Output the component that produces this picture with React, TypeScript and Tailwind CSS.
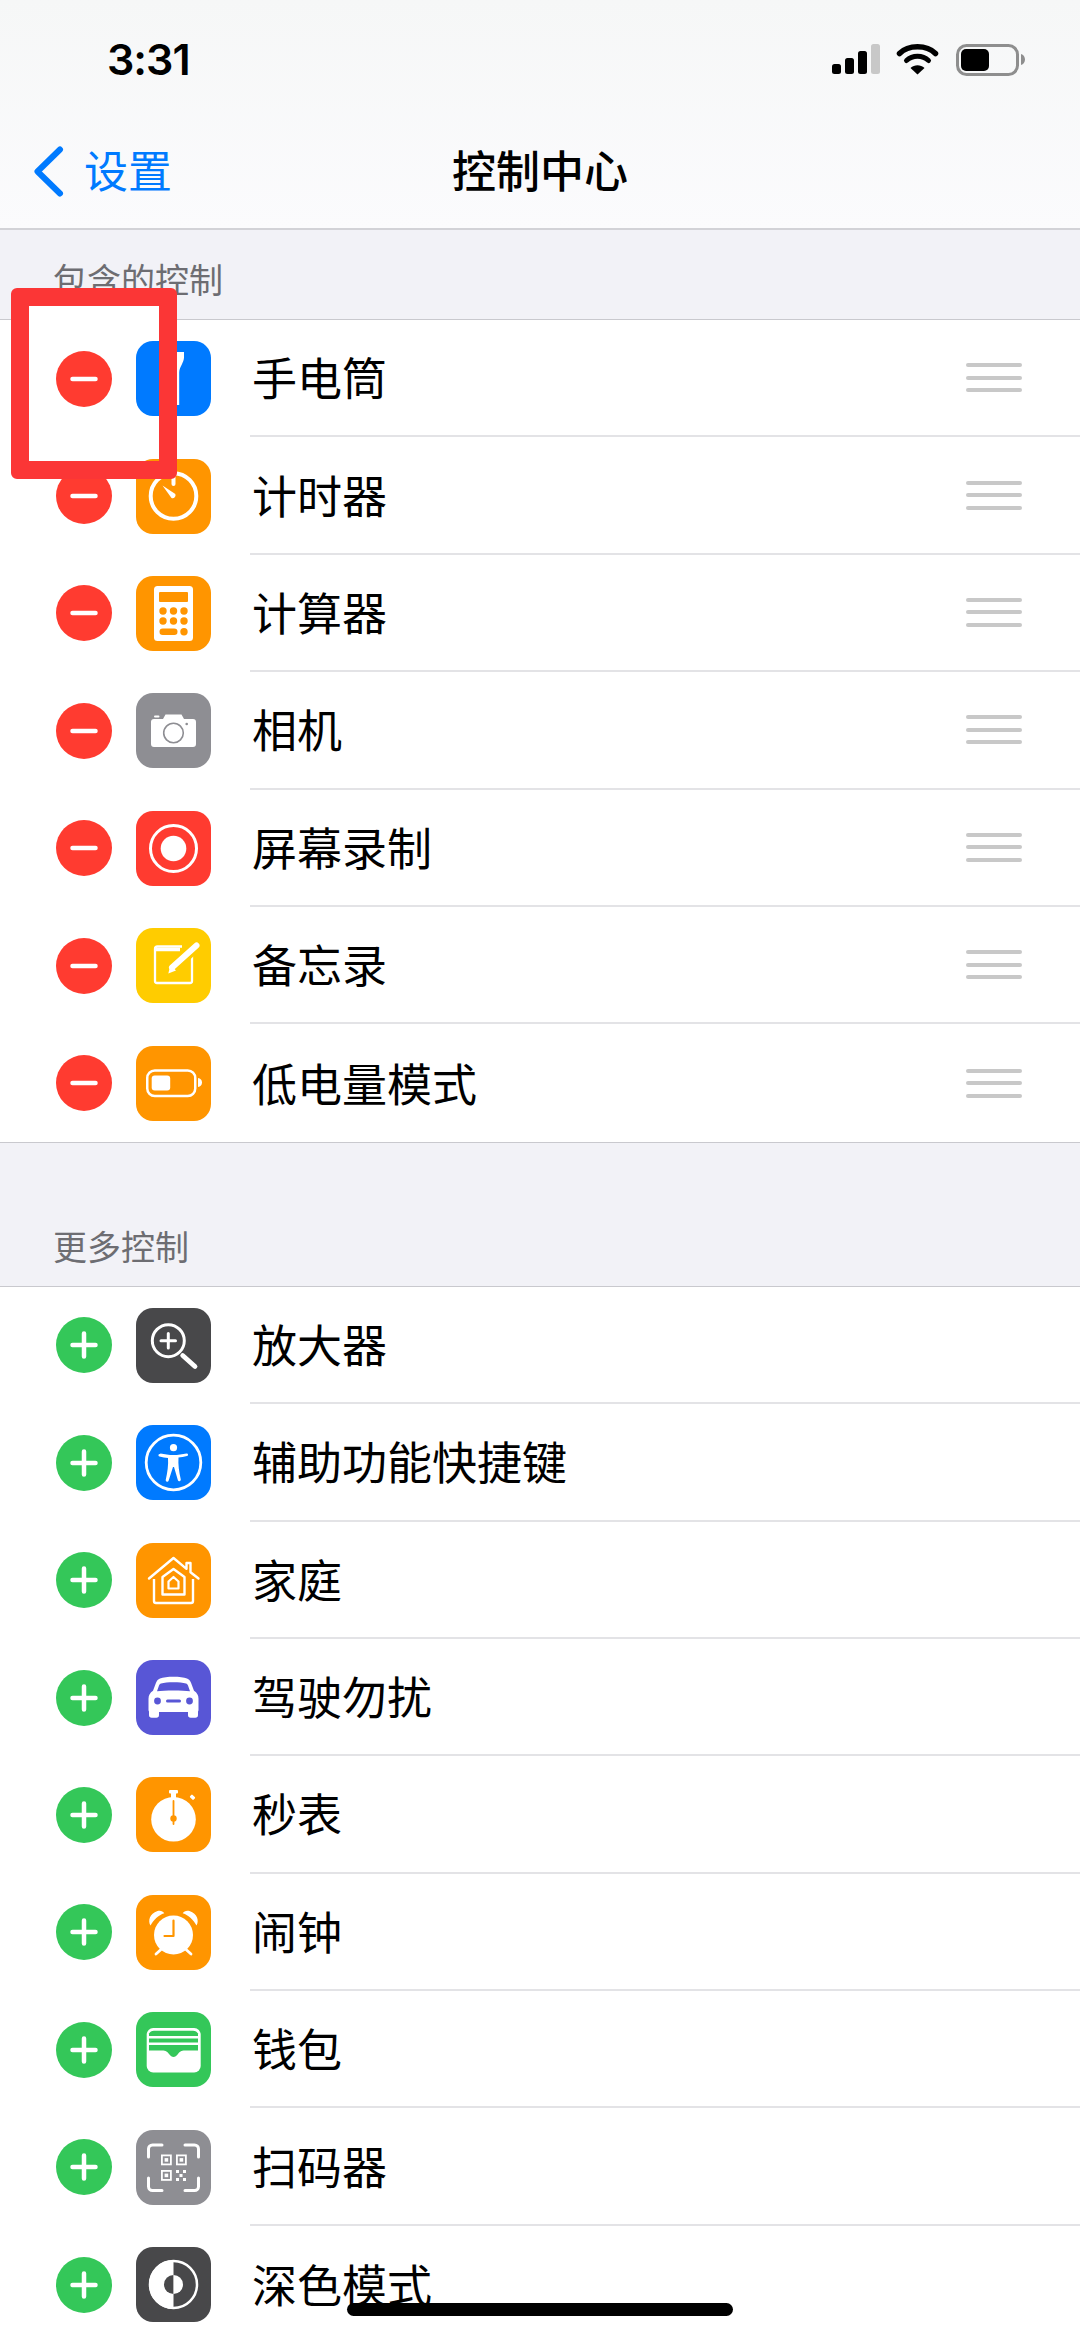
import type { ReactNode } from 'react';

const ORANGE = '#ff9500';

function Glyph({ children }: { children: ReactNode }) {
  return (
    <svg viewBox="0 0 75 75" className="w-full h-full" fill="none" stroke="none">
      {children}
    </svg>
  );
}

const glyphs: Record<string, ReactNode> = {
  flashlight: (
    <path d="M27 11h21v5.5c0 5-4.5 9-4.8 15V64H31V31.500c-.3-6-4-10-4-15z" fill="#fff" />
  ),
  timer: (
    <>
      <circle cx="37.500" cy="37" r="22.800" stroke="#fff" strokeWidth="4" />
      <path d="M37.500 17v8" stroke="#fff" strokeWidth="4" strokeLinecap="round" />
      <path d="M26.500 26.500l12.800 8.600a3 3 0 0 1-3.800 4z" fill="#fff" />
    </>
  ),
  calculator: (
    <>
      <rect x="18" y="10" width="39" height="55" rx="3.500" fill="#fff" />
      <rect x="23" y="16" width="29" height="10" rx="1" fill={ORANGE} />
      {[35, 45].map((y) =>
        [27, 37.5, 48].map((x) => <circle key={`${x}-${y}`} cx={x} cy={y} r="3.700" fill={ORANGE} />)
      )}
      <rect x="23.500" y="52.500" width="18" height="6.500" rx="3.250" fill={ORANGE} />
      <circle cx="48" cy="55.800" r="3.700" fill={ORANGE} />
    </>
  ),
  camera: (
    <>
      <path d="M15 29a3 3 0 0 1 3-3h9l2.500-4.500h16L48 26h9a3 3 0 0 1 3 3v22a3 3 0 0 1-3 3H18a3 3 0 0 1-3-3z" fill="#fff" />
      <rect x="18" y="22.500" width="5.500" height="2" rx="1" fill="#fff" />
      <circle cx="37.500" cy="40" r="9.800" fill="#fff" stroke="#8e8e93" strokeWidth="1.600" />
      <circle cx="50.700" cy="31" r="1.300" fill="#8e8e93" />
    </>
  ),
  record: (
    <>
      <circle cx="37.500" cy="37.500" r="23" stroke="#fff" strokeWidth="3" />
      <circle cx="37.500" cy="37.500" r="12.800" fill="#fff" />
    </>
  ),
  notes: (
    <>
      <path d="M46 18.500H21.500a2.500 2.500 0 0 0-2.500 2.500v32a2 2 0 0 0 2 2h33a2 2 0 0 0 2-2V28" stroke="#fff" strokeWidth="2.300" />
      <path d="M19 21.500h25" stroke="#fff" strokeWidth="3.500" />
      <path d="M31 46.500L61 17" stroke="#ffcc00" strokeWidth="11" />
      <path d="M36 39.500L60.500 17.500" stroke="#fff" strokeWidth="6" strokeLinecap="round" />
      <path d="M32.300 45.500l2.200-8.500 5.500 5.500z" fill="#fff" />
    </>
  ),
  battery: (
    <>
      <rect x="11.250" y="24.500" width="48" height="25.500" rx="7.500" stroke="#fff" strokeWidth="2.500" />
      <rect x="15.700" y="29.500" width="18.500" height="15" rx="3" fill="#fff" />
      <path d="M62 32c2.500.3 4 2 4 4.500s-1.500 4.200-4 4.500z" fill="#fff" />
    </>
  ),
  magnifier: (
    <>
      <circle cx="32.300" cy="32.700" r="16" stroke="#fff" strokeWidth="3" />
      <path d="M32.300 25.500v14.500M25 32.700h14.500" stroke="#fff" strokeWidth="3" strokeLinecap="round" />
      <path d="M46.700 47.500L59 58.500" stroke="#fff" strokeWidth="4.800" strokeLinecap="round" />
    </>
  ),
  accessibility: (
    <>
      <circle cx="37.500" cy="37.500" r="27.300" stroke="#fff" strokeWidth="2.800" />
      <circle cx="37.500" cy="22.700" r="3.600" fill="#fff" />
      <path d="M24.500 28.500c4 .9 8.500 1.500 13 1.500s9-.6 13-1.500a1.300 1.300 0 0 1 .5 2.600c-2.800.8-6 1.300-8.500 1.500-.5 7 .5 14 2.300 22a1.500 1.500 0 0 1-2.900.7L38 42h-1l-4.400 13.800a1.500 1.500 0 0 1-2.900-.7c1.800-8 2.800-15 2.300-22-2.500-.2-5.700-.7-8.500-1.500a1.300 1.300 0 0 1 .5-2.600z" fill="#fff" />
    </>
  ),
  home: (
    <>
      <path d="M13 35.500L37.500 15l13 10.800V20h4v9.200l8 6.300" stroke="#fff" strokeWidth="2.400" strokeLinejoin="round" strokeLinecap="round" />
      <path d="M18 36v22a2 2 0 0 0 2 2h35a2 2 0 0 0 2-2V36" stroke="#fff" strokeWidth="2.400" />
      <path d="M26.500 34L37.500 26l11 8v17.500h-22z" stroke="#fff" strokeWidth="2.400" strokeLinejoin="round" />
      <path d="M32.500 38.500l5-4.500 5 4.500v7h-10z" stroke="#fff" strokeWidth="2.200" strokeLinejoin="round" />
    </>
  ),
  car: (
    <>
      <path d="M24 18.500c3-1.200 8-1.700 13.500-1.700s10.500.5 13.500 1.700c2 .8 3 2 4 4.300l3 8c3 2 4.500 4.500 4.500 8v11a3 3 0 0 1-.5 1.700V55a2.700 2.700 0 0 1-2.700 2.700h-4.600A2.700 2.700 0 0 1 52 55v-3H23v3a2.700 2.700 0 0 1-2.700 2.700h-4.600A2.700 2.700 0 0 1 13 55v-3.500a3 3 0 0 1-.5-1.700v-11c0-3.500 1.500-6 4.500-8l3-8c1-2.300 2-3.500 4-4.300z" fill="#fff" />
      <path d="M25 23.500c3-.9 7.500-1.300 12.500-1.300s9.500.4 12.500 1.300c1 .3 1.500.9 2 2l2 5.800c-4-.6-10-.9-16.500-.9s-12.500.3-16.500.9l2-5.800c.5-1.100 1-1.700 2-2z" fill="#5856d6" />
      <circle cx="21.500" cy="41" r="3.400" fill="#5856d6" />
      <circle cx="53.500" cy="41" r="3.400" fill="#5856d6" />
      <rect x="30" y="39.500" width="15" height="3" rx="1.500" fill="#5856d6" />
    </>
  ),
  stopwatch: (
    <>
      <circle cx="37.500" cy="42.300" r="22.300" fill="#fff" />
      <rect x="35" y="13" width="5" height="8" fill="#fff" />
      <rect x="33" y="13" width="9" height="3.500" rx="1" fill="#fff" />
      <rect x="54" y="18.500" width="5" height="3.500" rx="1" fill="#fff" transform="rotate(45 56.500 20.250)" />
      <path d="M37.500 24v23" stroke={ORANGE} strokeWidth="1.800" strokeLinecap="round" />
      <circle cx="37.500" cy="41.500" r="3.200" fill={ORANGE} />
    </>
  ),
  alarm: (
    <>
      <circle cx="37.500" cy="40" r="19.500" fill="#fff" />
      <path d="M14.500 30.500c-2.800-4.500-1-12 7-14.500 3-.8 5.500.2 6.800 2.200-6 2-10.800 6.500-13.800 12.300z" fill="#fff" />
      <path d="M60.500 30.500c2.800-4.500 1-12-7-14.500-3-.8-5.500.2-6.800 2.200 6 2 10.800 6.500 13.800 12.300z" fill="#fff" />
      <path d="M20 59l5-4.500M55 59l-5-4.500" stroke="#fff" strokeWidth="2.800" strokeLinecap="round" />
      <path d="M37.500 25.500V41H28.500" stroke={ORANGE} strokeWidth="2.200" strokeLinecap="round" strokeLinejoin="round" />
    </>
  ),
  wallet: (
    <>
      <rect x="10.700" y="16" width="54" height="44.500" rx="6.500" fill="#fff" />
      <path d="M13 21.500c1-1.700 2.500-2.800 5-2.800h39c2.500 0 4 1.100 5 2.800v2.500H13z" fill="#34c759" />
      <path d="M13 26.500h49v4H13z" fill="#34c759" />
      <path d="M13 33h49v5.500H49c-4 0-5.500 1.500-7 3.500-1.500 2-3 3-4.500 3s-3-1-4.500-3c-1.500-2-3-3.500-7-3.500H13z" fill="#34c759" />
    </>
  ),
  scanner: (
    <>
      <path d="M12.500 27V19a4 4 0 0 1 4-4H26M49 15h9.500a4 4 0 0 1 4 4v8M62.500 48v8.500a4 4 0 0 1-4 4H49M26 60.500h-9.500a4 4 0 0 1-4-4V48" stroke="#fff" strokeWidth="3" strokeLinecap="round" />
      {[[25, 24.5], [40, 24.500], [25, 40]].map(([x, y]) => (
        <g key={`${x}-${y}`}>
          <rect x={x + 0.9} y={y + 0.9} width="9" height="9" stroke="#fff" strokeWidth="1.800" />
          <rect x={x + 3.6} y={y + 3.6} width="3.600" height="3.600" fill="#fff" />
        </g>
      ))}
      {[[40, 40], [47, 40], [43.500, 44], [40, 48], [47, 48]].map(([x, y]) => (
        <rect key={`${x}-${y}`} x={x} y={y} width="3" height="3" fill="#fff" />
      ))}
    </>
  ),
  dark: (
    <>
      <circle cx="37.500" cy="37.500" r="23.500" stroke="#fff" strokeWidth="2.500" />
      <path d="M37.500 13a24.500 24.500 0 0 0 0 49z" fill="#fff" />
      <path d="M37.500 28a9.500 9.500 0 0 0 0 19z" fill="#48484a" />
      <path d="M37.500 28a9.500 9.500 0 0 1 0 19z" fill="#fff" />
    </>
  ),
};

interface Control {
  name: string;
  icon: string;
  color: string;
}

const included: Control[] = [
  { name: '手电筒', icon: 'flashlight', color: 'bg-[#007aff]' },
  { name: '计时器', icon: 'timer', color: 'bg-[#ff9500]' },
  { name: '计算器', icon: 'calculator', color: 'bg-[#ff9500]' },
  { name: '相机', icon: 'camera', color: 'bg-[#8e8e93]' },
  { name: '屏幕录制', icon: 'record', color: 'bg-[#ff3b30]' },
  { name: '备忘录', icon: 'notes', color: 'bg-[#ffcc00]' },
  { name: '低电量模式', icon: 'battery', color: 'bg-[#ff9500]' },
];

const more: Control[] = [
  { name: '放大器', icon: 'magnifier', color: 'bg-[#48484a]' },
  { name: '辅助功能快捷键', icon: 'accessibility', color: 'bg-[#007aff]' },
  { name: '家庭', icon: 'home', color: 'bg-[#ff9500]' },
  { name: '驾驶勿扰', icon: 'car', color: 'bg-[#5856d6]' },
  { name: '秒表', icon: 'stopwatch', color: 'bg-[#ff9500]' },
  { name: '闹钟', icon: 'alarm', color: 'bg-[#ff9500]' },
  { name: '钱包', icon: 'wallet', color: 'bg-[#34c759]' },
  { name: '扫码器', icon: 'scanner', color: 'bg-[#8e8e93]' },
  { name: '深色模式', icon: 'dark', color: 'bg-[#48484a]' },
];

function StatusIcons() {
  return (
    <svg width="193" height="32" viewBox="0 0 193 32" fill="none">
      <rect x="0" y="20" width="9" height="10" rx="2.500" fill="#000" />
      <rect x="13" y="14" width="9" height="16" rx="2.500" fill="#000" />
      <rect x="26" y="7" width="9" height="23" rx="2.500" fill="#000" />
      <rect x="39" y="0" width="9" height="30" rx="2.500" fill="#c8c8c8" />
      <path d="M67.500 9.500C72 5 78 2.800 85.500 2.800S99 5 103.500 9.500" stroke="#000" strokeWidth="5.500" strokeLinecap="round" />
      <path d="M74.500 16.500c3-2.800 6.500-4.200 11-4.200s8 1.400 11 4.200" stroke="#000" strokeWidth="5" strokeLinecap="round" />
      <path d="M78.500 24c2-1.800 4.500-2.800 7-2.800s5 1 7 2.800l-7 6.500z" fill="#000" />
      <rect x="125.500" y="1.500" width="60" height="29" rx="9" stroke="#8e8e8e" strokeWidth="3" />
      <rect x="129" y="5" width="28" height="22" rx="5" fill="#000" />
      <path d="M189 10c2.500.5 4 3 4 5.500s-1.500 5-4 5.500z" fill="#8e8e8e" />
    </svg>
  );
}

function Row({ item, mode, last }: { item: Control; mode: 'remove' | 'add'; last: boolean }) {
  return (
    <div className="flex items-center h-[117.4px] pl-[56px] bg-white">
      <div
        className={`relative w-14 h-14 shrink-0 rounded-full ${mode === 'remove' ? 'bg-[#ff3b30]' : 'bg-[#34c759]'}`}
      >
        <svg viewBox="0 0 56 56" className="w-full h-full" fill="none">
          <path
            d={mode === 'remove' ? 'M16.500 28h23' : 'M16.500 28h23M28 16.500v23'}
            stroke="#fff"
            strokeWidth="4.500"
            strokeLinecap="round"
          />
        </svg>
      </div>
      <div className={`ml-6 w-[75px] h-[75px] shrink-0 rounded-[17px] overflow-hidden ${item.color}`}>
        <Glyph>{glyphs[item.icon]}</Glyph>
      </div>
      <div
        className={`ml-[39px] flex-1 self-stretch flex items-center justify-between pl-[2px] pr-[58px] ${
          last ? '' : 'border-b-2 border-[#e3e3e6]'
        }`}
      >
        <span className="mt-1 text-[45px] leading-none text-black whitespace-nowrap">{item.name}</span>
        {mode === 'remove' && (
          <div className="flex flex-col gap-[8.500px] w-14">
            <div className="h-1 rounded-full bg-[#c8c8c8]" />
            <div className="h-1 rounded-full bg-[#c8c8c8]" />
            <div className="h-1 rounded-full bg-[#c8c8c8]" />
          </div>
        )}
      </div>
    </div>
  );
}

function Section({ title, items, mode, headerClass }: { title: string; items: Control[]; mode: 'remove' | 'add'; headerClass: string }) {
  return (
    <section>
      <div className={`flex items-end pl-[53px] pb-[18px] ${headerClass}`}>
        <span className="text-[34px] leading-10 text-[#6d6d72]">{title}</span>
      </div>
      <div className="border-y border-[#c9c9ce]">
        {items.map((item, i) => (
          <Row key={item.name} item={item} mode={mode} last={i === items.length - 1} />
        ))}
      </div>
    </section>
  );
}

export default function App() {
  return (
    <div className="relative w-[1080px] h-[2337px] overflow-hidden bg-[#f2f2f7] font-['Inter','Noto_Sans_CJK_SC',sans-serif]">
      {/* nav */}
      <header className="h-[230px] bg-linear-to-b from-[#f6f7f7] to-[#fbfbfd] border-b-2 border-[#d2d2d7]">
        <div className="flex items-center justify-between h-[115px] pl-[107px] pr-[55px] pt-1">
          <span className="text-[43px] leading-none font-semibold text-black tracking-[-1px]">3:31</span>
          <StatusIcons />
        </div>
        <div className="grid grid-cols-[1fr_auto_1fr] items-center h-[113px] px-[33px]">
          <div className="flex items-center">
            <svg width="31" height="51" viewBox="0 0 31 51" fill="none">
              <path d="M27 3.500L4.500 25.500 27 47.500" stroke="#007aff" strokeWidth="6" strokeLinecap="round" strokeLinejoin="round" />
            </svg>
            <span className="ml-[20px] text-[44px] leading-none text-[#007aff]">设置</span>
          </div>
          <h1 className="text-[44px] leading-none font-medium text-black">控制中心</h1>
          <div />
        </div>
      </header>

      <Section title="包含的控制" items={included} mode="remove" headerClass="h-[89px]" />
      <Section title="更多控制" items={more} mode="add" headerClass="h-[143px]" />

      {/* hand-drawn marker over the first row */}
      <div className="absolute left-[11px] top-[288px] w-[166px] h-[191px] border-[18px] border-[#fb3636] rounded-[6px]">
        <div className="h-[15px] bg-white" />
      </div>

      {/* home indicator */}
      <div className="absolute left-[347px] top-[2303px] w-[386px] h-[13px] rounded-full bg-black" />
    </div>
  );
}
